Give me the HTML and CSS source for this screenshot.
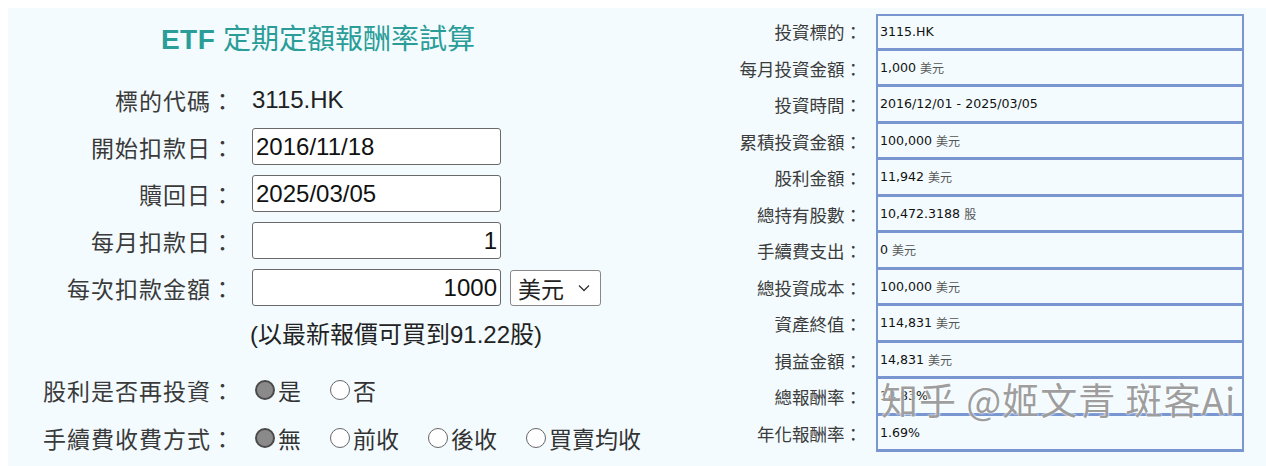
FILE: index.html
```html
<!DOCTYPE html>
<html lang="zh-Hant">
<head>
<meta charset="utf-8">
<title>ETF 定期定額報酬率試算</title>
<link rel="stylesheet" href="styles.css">
</head>
<body>
<div class="page">
  <section class="calc">
    <h1 class="title"><b>ETF</b> 定期定額報酬率試算</h1>
    <div class="form">
      <div class="row first"><span class="lbl">標的代碼：</span><span class="val">3115.HK</span></div>
      <div class="row"><span class="lbl">開始扣款日：</span><div class="field"><div class="input">2016/11/18</div></div></div>
      <div class="row"><span class="lbl">贖回日：</span><div class="field"><div class="input">2025/03/05</div></div></div>
      <div class="row"><span class="lbl">每月扣款日：</span><div class="field"><div class="input num">1</div></div></div>
      <div class="row"><span class="lbl">每次扣款金額：</span><div class="field"><div class="input num">1000</div><div class="select">美元<svg class="chev" viewBox="0 0 12 8" width="12" height="8"><path d="M1 1.5 L6 6.5 L11 1.5" fill="none" stroke="#333" stroke-width="1.3"/></svg></div></div></div>
      <div class="row note"><span class="lbl"></span><span class="val">(以最新報價可買到91.22股)</span></div>
      <div class="row radios first-radio"><span class="lbl">股利是否再投資：</span>
        <div class="opts">
          <span class="opt"><span class="radio on"></span>是</span>
          <span class="opt"><span class="radio"></span>否</span>
        </div>
      </div>
      <div class="row radios"><span class="lbl">手續費收費方式：</span>
        <div class="opts">
          <span class="opt"><span class="radio on"></span>無</span>
          <span class="opt"><span class="radio"></span>前收</span>
          <span class="opt"><span class="radio"></span>後收</span>
          <span class="opt"><span class="radio"></span>買賣均收</span>
        </div>
      </div>
    </div>
  </section>
  <section class="result">
    <div class="rl">投資標的：</div><div class="rv">3115.HK</div>
    <div class="rl">每月投資金額：</div><div class="rv">1,000 <span class="unit">美元</span></div>
    <div class="rl">投資時間：</div><div class="rv">2016/12/01 - 2025/03/05</div>
    <div class="rl">累積投資金額：</div><div class="rv">100,000 <span class="unit">美元</span></div>
    <div class="rl">股利金額：</div><div class="rv">11,942 <span class="unit">美元</span></div>
    <div class="rl">總持有股數：</div><div class="rv">10,472.3188 <span class="unit">股</span></div>
    <div class="rl">手續費支出：</div><div class="rv">0 <span class="unit">美元</span></div>
    <div class="rl">總投資成本：</div><div class="rv">100,000 <span class="unit">美元</span></div>
    <div class="rl">資產終值：</div><div class="rv">114,831 <span class="unit">美元</span></div>
    <div class="rl">損益金額：</div><div class="rv">14,831 <span class="unit">美元</span></div>
    <div class="rl">總報酬率：</div><div class="rv">14.83%</div>
    <div class="rl">年化報酬率：</div><div class="rv">1.69%</div>
  </section>
  <div class="watermark">知乎 @姬文青 斑客Ai</div>
</div>
</body>
</html>
```

FILE: styles.css
```css
html, body {
  margin: 0;
  padding: 0;
  background: #ffffff;
}
body {
  width: 1266px;
  height: 466px;
  overflow: hidden;
}
.page {
  position: relative;
  margin: 8px 0 0 8px;
  height: 458px;
  background: #f3fbfe;
  display: flex;
  font-family: "Liberation Sans", "Noto Sans CJK TC", sans-serif;
  color: #333;
}
.calc {
  width: 620px;
  flex: none;
}
.title {
  margin: 14px 0 0 0;
  height: 36px;
  line-height: 36px;
  text-align: center;
  font-size: 28px;
  font-weight: normal;
  color: #2a9d99;
  font-family: "Liberation Sans", "Noto Sans CJK TC", sans-serif;
}
.title b {
  font-weight: bold;
  font-family: "Liberation Sans", sans-serif;
  letter-spacing: 0.5px;
}
.form {
  margin-top: 23px;
  display: flex;
  flex-direction: column;
  gap: 10px;
}
.row {
  display: grid;
  grid-template-columns: 227px auto;
  column-gap: 17px;
  align-items: center;
  height: 37px;
  font-size: 24px;
}
.lbl {
  text-align: right;
  color: #3a3a3a;
  font-family: "Noto Sans CJK TC", sans-serif;
  font-size: 23px;
  letter-spacing: 1px;
  white-space: nowrap;
}
.val {
  color: #222;
  font-size: 24px;
  white-space: nowrap;
}
.field {
  display: flex;
  align-items: center;
}
.input {
  box-sizing: border-box;
  width: 249px;
  height: 37px;
  line-height: 35px;
  padding: 0 3px;
  border: 1px solid #6a6a6a;
  border-radius: 3px;
  background: #fff;
  color: #111;
  font-size: 24px;
}
.input.num {
  text-align: right;
}
.select {
  box-sizing: border-box;
  margin-left: 9px;
  width: 91px;
  height: 36px;
  border: 1px solid #888;
  border-radius: 3px;
  background: #fff;
  display: flex;
  align-items: center;
  padding-left: 7px;
  gap: 14px;
  font-family: "Noto Sans CJK TC", sans-serif;
  font-size: 23px;
  color: #222;
}
.chev {
  display: block;
}
.note {
  margin-top: -1px;
  height: 30px;
}
.note .val {
  margin-left: -2px;
  font-family: "Liberation Sans", "Noto Sans CJK TC", sans-serif;
  color: #222;
}
.radios {
  height: 37px;
}
.first-radio {
  margin-top: 16px;
}
.radios + .radios {
  margin-top: 1px;
}
.opts {
  display: flex;
  align-items: center;
  gap: 29px;
  margin-left: 3px;
  font-family: "Noto Sans CJK TC", sans-serif;
  font-size: 23px;
  color: #333;
  white-space: nowrap;
}
.opt {
  display: inline-flex;
  align-items: center;
  gap: 3px;
  white-space: nowrap;
  flex: none;
}
.radio {
  box-sizing: border-box;
  width: 20px;
  height: 20px;
  border-radius: 50%;
  border: 1.3px solid #666;
  background: #fff;
  display: inline-block;
  flex: none;
}
.radio.on {
  border: 2.5px solid #4a4a4a;
  background: #8a8a8a;
}
.result {
  flex: none;
  margin-top: 6px;
  display: grid;
  grid-template-columns: 234px 368px;
  grid-auto-rows: 36.5px;
  column-gap: 14px;
  align-self: flex-start;
}
.rl {
  text-align: right;
  font-family: "Noto Sans CJK TC", sans-serif;
  font-size: 17.5px;
  color: #3c3c3c;
  line-height: 36.5px;
}
.rv {
  box-sizing: border-box;
  border-left: 2px solid #7a96d0;
  border-right: 2px solid #7a96d0;
  border-bottom: 3px solid #7a96d0;
  padding-left: 2px;
  display: flex;
  align-items: center;
  gap: 4px;
  font-family: "DejaVu Sans", sans-serif;
  font-size: 12.6px;
  color: #111;
}
.rv:nth-child(2) {
  border-top: 2px solid #7a96d0;
}
.unit {
  font-family: "Noto Sans CJK TC", sans-serif;
  font-size: 12px;
  color: #555;
}
.watermark {
  position: absolute;
  left: 873px;
  top: 372px;
  font-family: "Noto Sans CJK SC", sans-serif;
  font-size: 37px;
  line-height: 38px;
  color: rgba(115, 115, 115, 0.7);
  text-shadow: 0 0 2px #fff, 0 0 2px #fff;
  white-space: nowrap;
  letter-spacing: 1px;
}
```
